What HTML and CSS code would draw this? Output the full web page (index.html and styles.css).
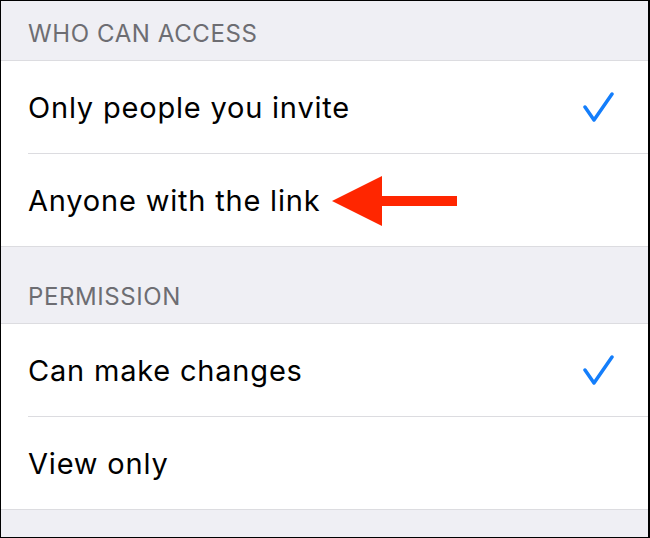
FILE: index.html
```html
<!DOCTYPE html>
<html>
<head>
    <title>Share Settings</title>
    <link rel="stylesheet" href="styles.css">
</head>
<body>
    <div class="screen">
        <div class="section-header first">WHO CAN ACCESS</div>
        <div class="group">
            <div class="row">
                <span class="label">Only people you invite</span>
                <svg class="check" width="31" height="30" viewBox="0 0 31 30">
                    <polyline points="2,15 11,28 29,2" />
                </svg>
            </div>
            <div class="row">
                <span class="label">Anyone with the link</span>
                <svg class="arrow" width="126" height="50" viewBox="0 0 126 50">
                    <polygon points="0,25 50,0 50,20 125,20 125,30 50,30 50,50" />
                </svg>
            </div>
        </div>

        <div class="section-header">PERMISSION</div>
        <div class="group">
            <div class="row">
                <span class="label">Can make changes</span>
                <svg class="check" width="31" height="30" viewBox="0 0 31 30">
                    <polyline points="2,15 11,28 29,2" />
                </svg>
            </div>
            <div class="row">
                <span class="label">View only</span>
            </div>
        </div>
    </div>
</body>
</html>
```

FILE: styles.css
```css
body {
    margin: 0;
    font-family: Inter, "Liberation Sans", Arial, sans-serif;
}
.screen {
    height: 538px;
    box-sizing: border-box;
    border-top: 1px solid #000;
    border-left: 1px solid #000;
    border-right: 2px solid #000;
    border-bottom: 1px solid #000;
    background-color: #efeff4;
    overflow: hidden;
}
.section-header {
    height: 76px;
    box-sizing: border-box;
    display: flex;
    align-items: flex-end;
    padding: 0 0 12px 27px;
    font-size: 24px;
    letter-spacing: 0.6px;
    color: #6d6d72;
}
.section-header.first {
    height: 59px;
}
.group {
    background-color: #fff;
    border-top: 1px solid #dcdce0;
    border-bottom: 1px solid #dcdce0;
}
.row {
    position: relative;
    height: 92px;
    margin-left: 27px;
    padding-right: 34px;
    display: flex;
    align-items: center;
    justify-content: space-between;
    font-size: 29px;
    letter-spacing: 0.8px;
    color: #000;
}
.row + .row {
    border-top: 1px solid #dcdce0;
}
.check polyline {
    fill: none;
    stroke: #147efb;
    stroke-width: 3.5;
    stroke-linecap: round;
    stroke-linejoin: round;
}
.arrow {
    position: absolute;
    left: 304px;
    top: 22px;
}
.arrow polygon {
    fill: #ff2600;
}
```
